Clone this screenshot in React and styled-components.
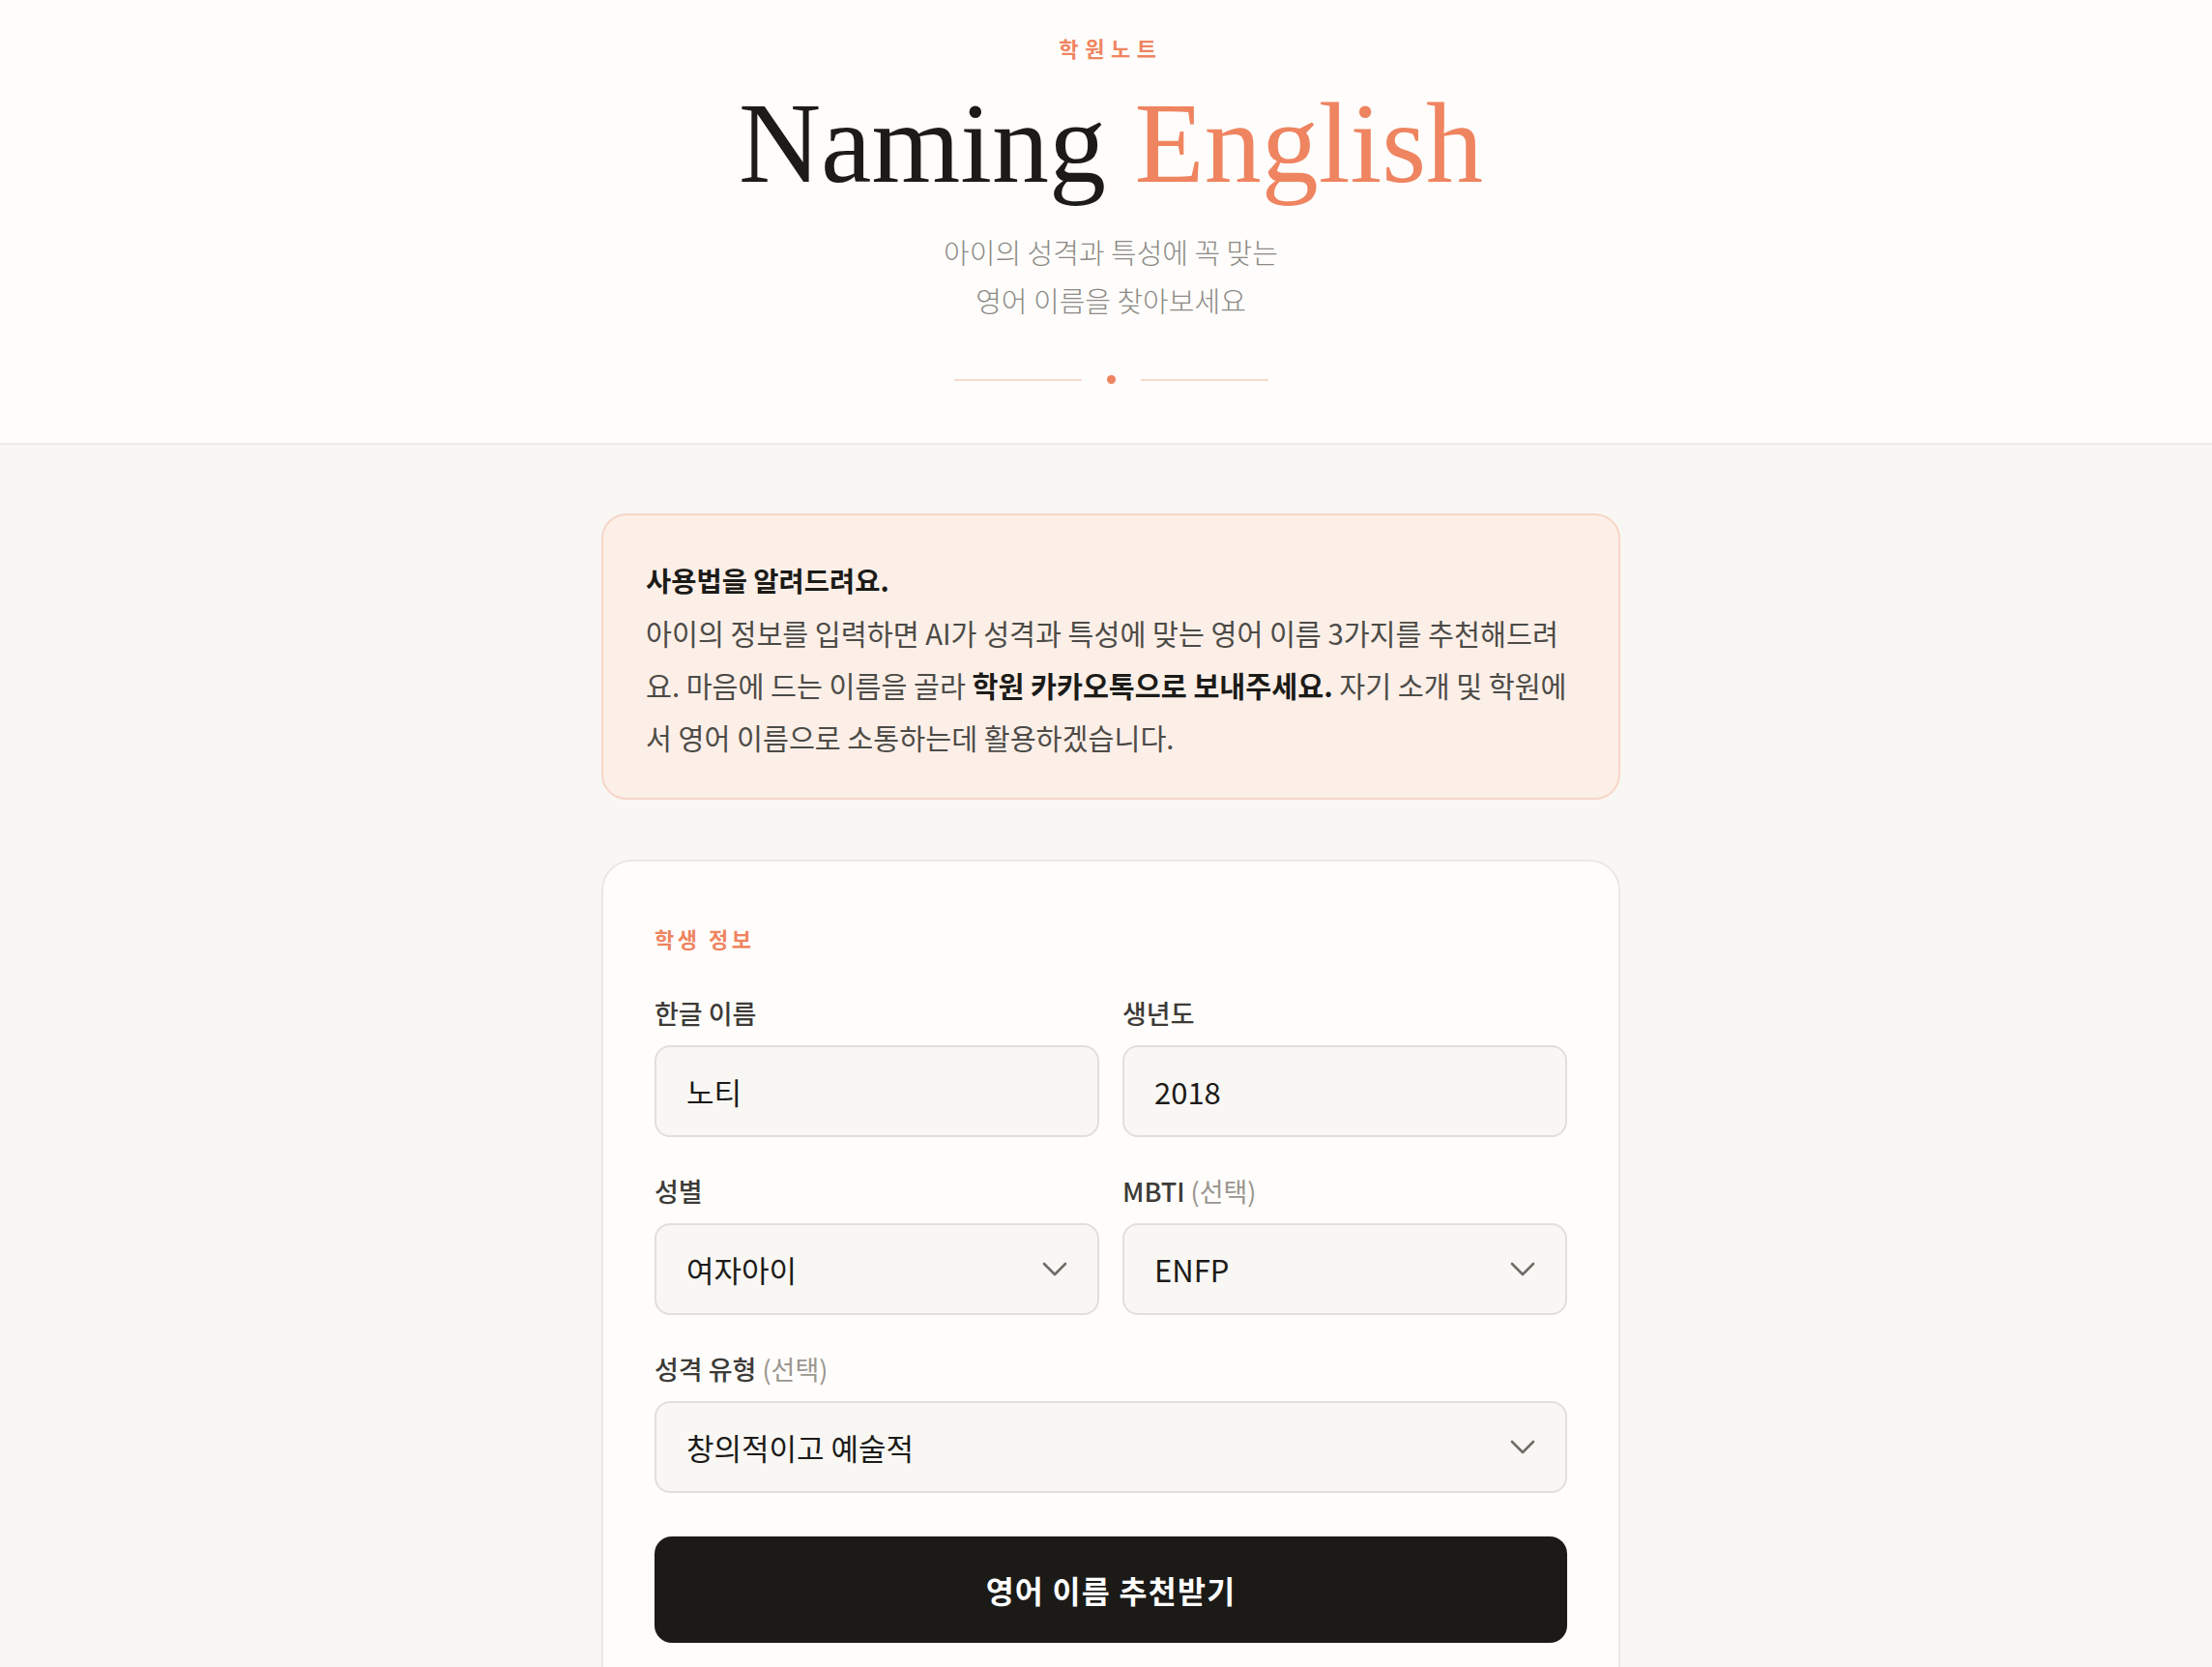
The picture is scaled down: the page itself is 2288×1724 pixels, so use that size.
import React from 'react'
import styled, { createGlobalStyle } from 'styled-components'

const GlobalStyle = createGlobalStyle`
  * { box-sizing: border-box; }
  body {
    margin: 0;
    background: #f8f7f4;
    font-family: 'Noto Sans CJK KR', 'Noto Sans', sans-serif;
    color: #1c1b18;
  }
`

const Header = styled.header`
  background: #fefdfb;
  border-bottom: 2px solid #ebe9e5;
  padding: 32px 0 61px 10px;
  text-align: center;
`

const Eyebrow = styled.div`
  font-size: 22px;
  line-height: 34px;
  font-weight: 700;
  letter-spacing: 0.3em;
  color: #ef8460;
`

const Title = styled.h1`
  margin: 25px 0 0;
  font-family: 'Liberation Serif', 'Times New Roman', serif;
  font-weight: 400;
  font-size: 118px;
  line-height: 116px;
  color: #1c1b18;

  span {
    color: #ef8460;
  }
`

const Subtitle = styled.p`
  margin: 28px 0 0;
  font-size: 29px;
  line-height: 50px;
  color: #8c8a85;
  font-weight: 300;
`

const Divider = styled.div`
  margin-top: 53px;
  display: flex;
  align-items: center;
  justify-content: center;
  gap: 26px;
`

const DividerLine = styled.span`
  width: 132px;
  height: 2px;
  background: #f6d9cc;
`

const DividerDot = styled.span`
  width: 9px;
  height: 9px;
  border-radius: 50%;
  background: #ef8460;
`

const Page = styled.main`
  padding: 71px 0 80px 10px;
`

const Column = styled.div`
  width: 1054px;
  margin: 0 auto;
`

const Notice = styled.section`
  background: #fcefe8;
  border: 2px solid #f7d6c8;
  border-radius: 26px;
  padding: 47px 46px 36px 44px;
`

const NoticeTitle = styled.h2`
  margin: 0 0 7px;
  font-size: 28.5px;
  line-height: 40px;
  font-weight: 700;
  color: #1c1b18;
`

const NoticeText = styled.p`
  margin: 0;
  font-size: 29.3px;
  line-height: 54px;
  color: #4d4b47;

  strong {
    color: #1c1b18;
    font-weight: 700;
  }
`

const Card = styled.section`
  margin-top: 62px;
  background: #fefdfb;
  border: 2px solid #ebe8e3;
  border-radius: 32px;
  padding: 64px 53px 60px;
`

const SectionLabel = styled.div`
  font-size: 22px;
  line-height: 30px;
  font-weight: 700;
  letter-spacing: 0.16em;
  color: #ef8460;
  margin-bottom: 45px;
`

const Grid = styled.div`
  display: grid;
  grid-template-columns: 1fr 1fr;
  column-gap: 24px;
  row-gap: 38px;
`

const Field = styled.div`
  display: flex;
  flex-direction: column;
  gap: 15px;
  grid-column: ${(p) => (p.$wide ? '1 / -1' : 'auto')};
`

const Label = styled.label`
  font-size: 27px;
  line-height: 36px;
  font-weight: 500;
  color: #3d3b38;

  small {
    font-size: 27px;
    font-weight: 400;
    color: #9a968f;
    margin-left: 6px;
  }
`

const controlStyles = `
  width: 100%;
  height: 95px;
  padding: 0 31px;
  background: #f8f7f4;
  border: 2px solid #e2dfda;
  border-radius: 16px;
  font-family: 'Noto Sans CJK KR', 'Noto Sans', sans-serif;
  font-size: 31px;
  color: #1c1b18;
  outline: none;
`

const Input = styled.input`
  ${controlStyles}
`

const SelectWrap = styled.div`
  position: relative;
`

const Select = styled.select`
  ${controlStyles}
  appearance: none;
  -webkit-appearance: none;
`

const Chevron = styled.svg`
  position: absolute;
  right: 33px;
  top: 50%;
  transform: translateY(-50%);
  pointer-events: none;
`

const SubmitButton = styled.button`
  margin-top: 45px;
  width: 100%;
  height: 110px;
  border: none;
  border-radius: 18px;
  background: #1b1a17;
  color: #fff;
  font-family: 'Noto Sans CJK KR', 'Noto Sans', sans-serif;
  font-size: 31.5px;
  font-weight: 700;
  letter-spacing: 0.04em;
  cursor: pointer;
`

const ChevronIcon = () => (
  <Chevron width='26' height='16' viewBox='0 0 26 16' fill='none'>
    <polyline
      points='2,2 13,13 24,2'
      stroke='#6f6c68'
      strokeWidth='2.6'
      strokeLinecap='round'
      strokeLinejoin='round'
    />
  </Chevron>
)

const SelectField = ({ value, options }) => (
  <SelectWrap>
    <Select defaultValue={value}>
      {options.map((o) => (
        <option key={o} value={o}>
          {o}
        </option>
      ))}
    </Select>
    <ChevronIcon />
  </SelectWrap>
)

const mbtiList = [
  'ISTJ', 'ISFJ', 'INFJ', 'INTJ', 'ISTP', 'ISFP', 'INFP', 'INTP',
  'ESTP', 'ESFP', 'ENFP', 'ENTP', 'ESTJ', 'ESFJ', 'ENFJ', 'ENTJ',
]

const App = () => {
  return (
    <>
      <GlobalStyle />
      <Header>
        <Eyebrow>학원노트</Eyebrow>
        <Title>
          Naming <span>English</span>
        </Title>
        <Subtitle>
          아이의 성격과 특성에 꼭 맞는
          <br />
          영어 이름을 찾아보세요
        </Subtitle>
        <Divider>
          <DividerLine />
          <DividerDot />
          <DividerLine />
        </Divider>
      </Header>

      <Page>
        <Column>
          <Notice>
            <NoticeTitle>사용법을 알려드려요.</NoticeTitle>
            <NoticeText>
              아이의 정보를 입력하면 AI가 성격과 특성에 맞는 영어 이름 3가지를 추천해드려요.
              마음에 드는 이름을 골라 <strong>학원 카카오톡으로 보내주세요.</strong> 자기 소개
              및 학원에서 영어 이름으로 소통하는데 활용하겠습니다.
            </NoticeText>
          </Notice>

          <Card>
            <SectionLabel>학생 정보</SectionLabel>
            <Grid>
              <Field>
                <Label>한글 이름</Label>
                <Input type='text' defaultValue='노티' />
              </Field>
              <Field>
                <Label>생년도</Label>
                <Input type='text' defaultValue='2018' />
              </Field>
              <Field>
                <Label>성별</Label>
                <SelectField value='여자아이' options={['여자아이', '남자아이']} />
              </Field>
              <Field>
                <Label>
                  MBTI<small>(선택)</small>
                </Label>
                <SelectField value='ENFP' options={mbtiList} />
              </Field>
              <Field $wide>
                <Label>
                  성격 유형<small>(선택)</small>
                </Label>
                <SelectField
                  value='창의적이고 예술적'
                  options={['창의적이고 예술적', '활발하고 사교적', '차분하고 신중한', '호기심이 많은']}
                />
              </Field>
            </Grid>
            <SubmitButton>영어 이름 추천받기</SubmitButton>
          </Card>
        </Column>
      </Page>
    </>
  )
}

export default App
